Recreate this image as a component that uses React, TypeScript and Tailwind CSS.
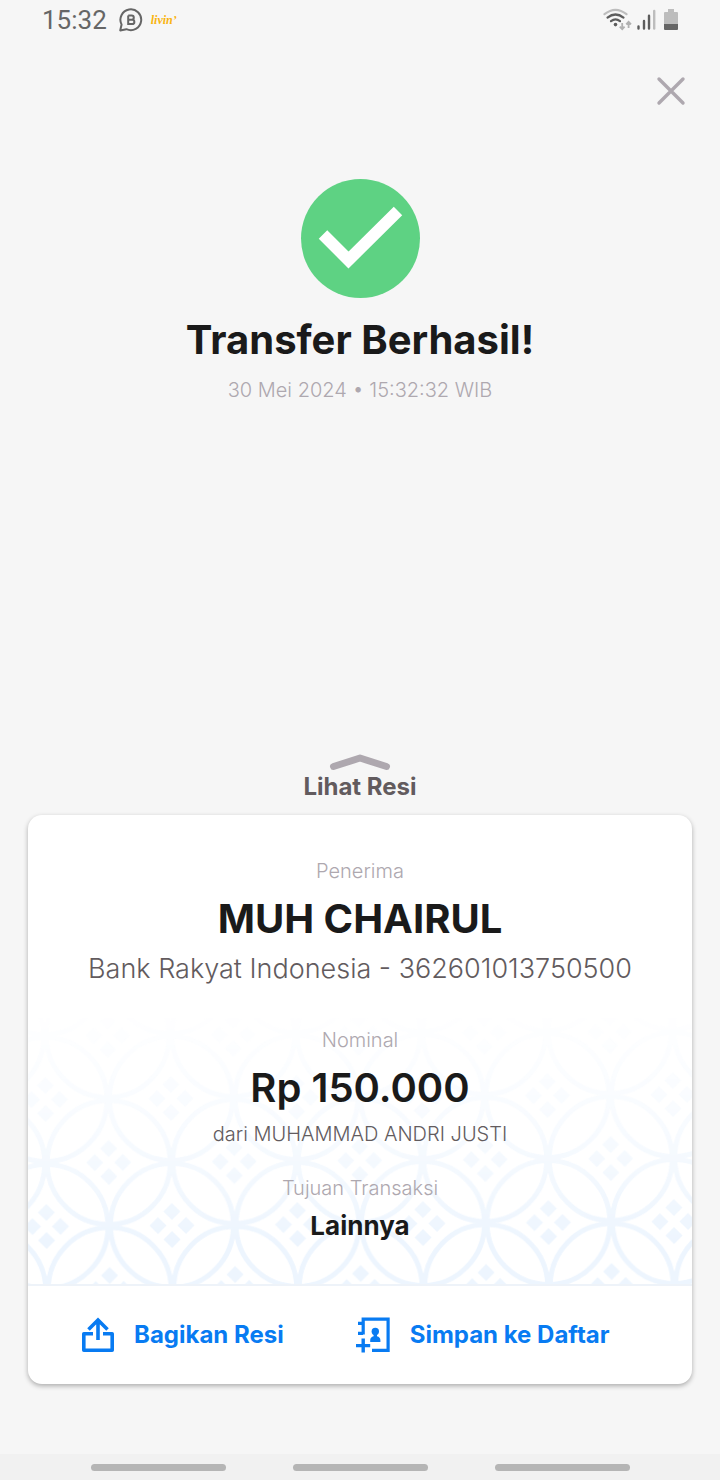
import React from "react";

function StatusBar() {
  return (
    <header className="flex h-10 items-center justify-between pl-[42px] pr-[42px] text-[#666]">
      <div className="flex items-center gap-3">
        <time className="font-['Roboto',sans-serif] text-[26px] leading-8">15:32</time>
        <svg className="size-6" viewBox="0 0 24 24" fill="none" stroke="currentColor" strokeWidth="2" role="img" aria-label="WhatsApp Business">
          <path d="M1.2 22.4 2.6 16.6A10.4 10.4 0 1 1 7.4 21.2Z" strokeLinejoin="round" />
          <path d="M9.2 7.600h3.500a2 2 0 0 1 0 4.200H9.200m0 0h4a2.100 2.100 0 0 1 0 4.300H9.200V7.600" strokeWidth="2" />
        </svg>
        <span className="-ml-1 font-['Liberation_Serif',serif] text-xs leading-4 font-bold text-[#f9b410] italic">livin’</span>
      </div>
      <svg className="h-6 w-[76px]" viewBox="0 0 76 24" fill="none" role="img" aria-label="Wi-Fi, sinyal dan baterai">
        <g strokeLinecap="round" strokeWidth="2.2">
          <path d="M2.500 6.200Q13.500-2.600 24.500 6.200" stroke="#bdbdbd" />
          <path d="M5.500 9.600Q13.500 3.400 21.500 9.600M9 13.200Q13.500 9.600 18 13.200" stroke="#5c5c5c" />
        </g>
        <circle cx="13.500" cy="16.600" r="1.800" fill="#5c5c5c" />
        <path d="M20.200 15v6M17.800 18.600l2.400 2.600 2.400-2.600M26.600 20v-6M24.200 16.400l2.400-2.600 2.400 2.600" stroke="#b0b0b0" strokeWidth="1.800" />
        <g strokeLinecap="round" strokeWidth="2.400">
          <path d="M36.500 18.400v2.200M42 13v7.600M47 7.800v12.800" stroke="#5c5c5c" />
          <path d="M52.200 3v17.600" stroke="#bdbdbd" />
        </g>
        <path d="M66 1h6v3h3a1 1 0 0 1 1 1v11H62V5a1 1 0 0 1 1-1h3z" fill="#bdbdbd" />
        <path d="M62 16h14v5a1 1 0 0 1-1 1H63a1 1 0 0 1-1-1z" fill="#666" />
      </svg>
    </header>
  );
}

const ringCentres = [
  [62.75, 0],
  [62.75, 127],
  [0, 63.5],
  [125.5, 63.5],
  [-62.75, 0],
  [188.25, 0],
  [-62.75, 127],
  [188.25, 127],
  [0, -63.5],
  [125.5, -63.5],
  [0, 190.5],
  [125.5, 190.5],
];

const diamonds = [
  [0, -14],
  [14, 0],
  [0, 14],
  [-14, 0],
];

function BatikPattern() {
  return (
    <svg className="absolute inset-x-0 bottom-0 h-[266px] w-full" aria-hidden="true">
      <defs>
        <linearGradient id="fade" x1="0" y1="0" x2="0" y2="1">
          <stop offset="0" stopColor="#fff" stopOpacity="0.05" />
          <stop offset="0.4" stopColor="#fff" stopOpacity="0.4" />
          <stop offset="0.85" stopColor="#fff" stopOpacity="1" />
        </linearGradient>
        <mask id="fadeMask">
          <rect width="100%" height="100%" fill="url(#fade)" />
        </mask>
        <pattern
          id="batik"
          width="125.5"
          height="127"
          patternUnits="userSpaceOnUse"
          patternTransform="translate(18 145) rotate(-0.45)"
        >
          {ringCentres.map(([x, y]) => (
            <g key={`${x},${y}`}>
              <ellipse cx={x} cy={y} rx="61.500" ry="62" fill="none" stroke="#edf5fe" strokeWidth="5" />
              {diamonds.map(([dx, dy]) => (
                <path
                  key={`${dx},${dy}`}
                  transform={`translate(${x + dx} ${y + dy})`}
                  d="M0-8.500 8.500 0 0 8.500-8.500 0Z"
                  fill="#edf5fe"
                />
              ))}
            </g>
          ))}
        </pattern>
      </defs>
      <rect width="100%" height="100%" fill="url(#batik)" mask="url(#fadeMask)" />
    </svg>
  );
}

function ShareIcon() {
  return (
    <svg className="h-9 w-8 shrink-0" viewBox="0 0 32 36" fill="none" stroke="currentColor" strokeWidth="3.6" aria-hidden="true">
      <path d="M11 16.800H1.800v16.400h28.400V16.800H21" strokeLinejoin="round" />
      <path d="M16 23V3M6.500 12.500 16 3l9.500 9.500" />
    </svg>
  );
}

function ContactIcon() {
  return (
    <svg className="h-9 w-[34px] shrink-0" viewBox="0 0 34 36" fill="none" stroke="currentColor" strokeWidth="3.2" aria-hidden="true">
      <path d="M7.200 17.500V2.100h24.900v31.300H16" />
      <path d="M2 6.300h5M2 16.300h5" />
      <path d="M7.200 21.600v13.800M0 28.600h14.200" strokeWidth="3.400" />
      <g fill="currentColor" stroke="none">
        <circle cx="19.300" cy="14.500" r="3.700" />
        <path d="M17.600 17h3.400v2.200c2.200.500 3.400 2 3.400 4v1.800H14.200v-1.800c0-2 1.200-3.500 3.400-4z" />
      </g>
    </svg>
  );
}

export default function App() {
  return (
    <div className="flex min-h-screen flex-col bg-[#f6f6f6] font-['Inter',sans-serif] text-[#1a1a1a]">
      <StatusBar />
      <main className="flex flex-1 flex-col">
        <div className="flex justify-end px-[31px] pt-8">
          <button type="button" aria-label="Tutup" className="flex size-9 items-center justify-center text-[#aea8af]">
            <svg className="size-9" viewBox="0 0 36 36" fill="none" stroke="currentColor" strokeWidth="3.4" strokeLinecap="round">
              <path d="M6 7 30 31M30 7 6 31" />
            </svg>
          </button>
        </div>

        <section className="flex flex-col items-center pt-[70px] text-center">
          <svg className="size-[120px]" viewBox="0 0 120 120" aria-hidden="true">
            <circle cx="60.500" cy="60.500" r="59.500" fill="#5ed283" />
            <path d="M23 56.500 48.500 82 98 33" fill="none" stroke="#fff" strokeWidth="12" />
          </svg>
          <h1 className="pt-[18px] text-[40px] leading-12 font-bold">Transfer Berhasil!</h1>
          <p className="pt-3 text-xl leading-7 font-light text-[#aea8af]">30 Mei 2024 • 15:32:32 WIB</p>
        </section>

        <section className="mt-auto flex flex-col px-7 pb-[70px]">
          <button type="button" className="flex flex-col items-center self-center text-2xl leading-8 font-bold text-[#625b5e]">
            <svg className="h-[18px] w-16" viewBox="0 0 64 18" fill="none" stroke="#aea8af" strokeWidth="7" strokeLinecap="round" strokeLinejoin="round" aria-hidden="true">
              <path d="M5.500 13.500 32 5l26.500 8.500" />
            </svg>
            Lihat Resi
          </button>

          <div className="mt-3 overflow-hidden rounded-[14px] bg-white shadow-[0_2px_5px_rgba(0,0,0,0.3)]">
            <div className="relative border-b-2 border-[#eef3f9]">
              <BatikPattern />
              <div className="relative flex flex-col items-center px-4 pt-[42px] pb-[42px] text-center">
                <p className="text-xl leading-7 font-light text-[#aea8af]">Penerima</p>
                <h2 className="pt-[10px] text-[40px] leading-12 font-bold">MUH CHAIRUL</h2>
                <p className="pt-2 text-[27px] leading-9 font-light text-[#625b5e]">Bank Rakyat Indonesia - 362601013750500</p>
                <p className="pt-[39px] text-xl leading-7 font-light text-[#aea8af]">Nominal</p>
                <p className="pt-[10px] text-[40px] leading-12 font-semibold">Rp 150.000</p>
                <p className="pt-2 text-xl leading-7 font-light text-[#625b5e]">dari MUHAMMAD ANDRI JUSTI</p>
                <p className="pt-[26px] text-xl leading-7 font-light text-[#aea8af]">Tujuan Transaksi</p>
                <p className="pt-2 text-[26px] leading-8 font-bold">Lainnya</p>
              </div>
            </div>
            <div className="flex h-[98px] items-center gap-[72px] pl-[54px] text-2xl leading-8 font-bold text-[#087bf2]">
              <button type="button" className="flex items-center gap-5">
                <ShareIcon />
                Bagikan Resi
              </button>
              <button type="button" className="flex items-center gap-5">
                <ContactIcon />
                Simpan ke Daftar
              </button>
            </div>
          </div>
        </section>
      </main>
      <nav aria-label="Navigasi sistem" className="flex h-[26px] items-center justify-center gap-[67px] bg-[#f1f1f1]">
        <button type="button" aria-label="Terbaru" className="h-[7px] w-[135px] rounded-full bg-[#b5b5b5]" />
        <button type="button" aria-label="Beranda" className="h-[7px] w-[135px] rounded-full bg-[#b5b5b5]" />
        <button type="button" aria-label="Kembali" className="h-[7px] w-[135px] rounded-full bg-[#b5b5b5]" />
      </nav>
    </div>
  );
}
